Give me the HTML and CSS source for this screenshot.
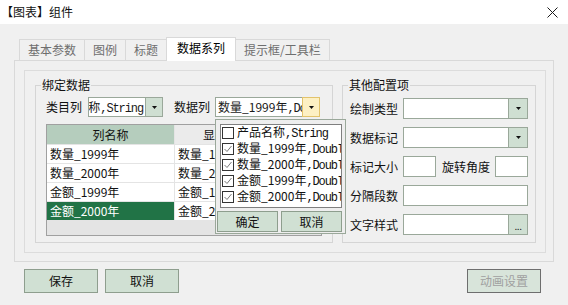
FILE: index.html
```html
<!DOCTYPE html>
<html lang="zh">
<head>
<meta charset="utf-8">
<title>组件</title>
<link rel="stylesheet" href="styles.css">
</head>
<body>
<div class="titlebar">
  <span class="title">【图表】组件</span>
  <svg class="close" width="11" height="11" viewBox="0 0 11 11"><path d="M0.5 0.5L10.5 10.5M10.5 0.5L0.5 10.5" stroke="#1a1a1a" stroke-width="1"/></svg>
</div>
<div class="tabs">
  <div class="tab">基本参数</div>
  <div class="tab">图例</div>
  <div class="tab">标题</div>
  <div class="tab active">数据系列</div>
  <div class="tab">提示框/工具栏</div>
</div>
<div class="pane">
  <div class="inner">
    <fieldset class="fs fs-bind">
      <legend>绑定数据</legend>
      <div class="row">
        <span class="lbl">类目列</span>
        <div class="combo combo-cat">
          <div class="combo-text end"><span>产品名称<span class="mono">,String</span></span></div>
          <div class="combo-btn"><svg width="5" height="3" viewBox="0 0 5 3"><path d="M0 0H5L2.5 3Z" fill="#111"/></svg></div>
        </div>
        <span class="lbl lbl-data">数据列</span>
        <div class="combo combo-data">
          <div class="combo-text">数量_1999年<span class="mono">,Double</span></div>
          <div class="combo-btn hover"><svg width="5" height="3" viewBox="0 0 5 3"><path d="M0 0H5L2.5 3Z" fill="#111"/></svg></div>
          <div class="popup">
            <div class="list">
              <div class="item"><svg width="12" height="12" viewBox="0 0 12 12"><rect x="0.5" y="0.5" width="11" height="11" fill="#fff" stroke="#333"/></svg><span>产品名称<span class="mono">,String</span></span></div>
              <div class="item"><svg width="12" height="12" viewBox="0 0 12 12"><rect x="0.5" y="0.5" width="11" height="11" fill="#fff" stroke="#333"/><path d="M2.5 6L5 8.5L9.5 3" fill="none" stroke="#7a7a7a" stroke-width="1"/></svg><span>数量_1999年<span class="mono">,Double</span></span></div>
              <div class="item"><svg width="12" height="12" viewBox="0 0 12 12"><rect x="0.5" y="0.5" width="11" height="11" fill="#fff" stroke="#333"/><path d="M2.5 6L5 8.5L9.5 3" fill="none" stroke="#7a7a7a" stroke-width="1"/></svg><span>数量_2000年<span class="mono">,Double</span></span></div>
              <div class="item"><svg width="12" height="12" viewBox="0 0 12 12"><rect x="0.5" y="0.5" width="11" height="11" fill="#fff" stroke="#333"/><path d="M2.5 6L5 8.5L9.5 3" fill="none" stroke="#7a7a7a" stroke-width="1"/></svg><span>金额_1999年<span class="mono">,Double</span></span></div>
              <div class="item"><svg width="12" height="12" viewBox="0 0 12 12"><rect x="0.5" y="0.5" width="11" height="11" fill="#fff" stroke="#333"/><path d="M2.5 6L5 8.5L9.5 3" fill="none" stroke="#7a7a7a" stroke-width="1"/></svg><span>金额_2000年<span class="mono">,Double</span></span></div>
            </div>
            <div class="pbtns">
              <div class="pbtn">确定</div>
              <div class="pbtn">取消</div>
            </div>
          </div>
        </div>
      </div>
      <div class="grid">
        <div class="cell head first">列名称</div>
        <div class="cell head">显示名称</div>
        <div class="cell">数量_1999年</div>
        <div class="cell">数量_1999年</div>
        <div class="cell">数量_2000年</div>
        <div class="cell">数量_2000年</div>
        <div class="cell">金额_1999年</div>
        <div class="cell">金额_1999年</div>
        <div class="cell sel">金额_2000年</div>
        <div class="cell">金额_2000年</div>
      </div>
    </fieldset>
    <fieldset class="fs fs-other">
      <legend>其他配置项</legend>
      <div class="form">
        <div class="frow">
          <span class="lbl">绘制类型</span>
          <div class="field"><div class="ftext"></div><div class="fbtn"><svg width="5" height="3" viewBox="0 0 5 3"><path d="M0 0H5L2.5 3Z" fill="#111"/></svg></div></div>
        </div>
        <div class="frow">
          <span class="lbl">数据标记</span>
          <div class="field"><div class="ftext"></div><div class="fbtn"><svg width="5" height="3" viewBox="0 0 5 3"><path d="M0 0H5L2.5 3Z" fill="#111"/></svg></div></div>
        </div>
        <div class="frow">
          <span class="lbl">标记大小</span>
          <div class="field small"></div>
          <span class="lbl lbl-rot">旋转角度</span>
          <div class="field small"></div>
        </div>
        <div class="frow">
          <span class="lbl">分隔段数</span>
          <div class="field"></div>
        </div>
        <div class="frow">
          <span class="lbl">文字样式</span>
          <div class="field"><div class="ftext"></div><div class="fbtn dots">...</div></div>
        </div>
      </div>
    </fieldset>
  </div>
</div>
<div class="actions">
  <div class="btn">保存</div>
  <div class="btn">取消</div>
  <div class="btn disabled">动画设置</div>
</div>
</body>
</html>
```

FILE: styles.css
```css
* { box-sizing: border-box; }
html, body { margin: 0; padding: 0; }
body {
  width: 568px;
  height: 305px;
  overflow: hidden;
  background: #f0f0f0;
  font: 12px/14px "Noto Sans CJK SC", "Noto Sans", sans-serif;
  color: #1a1a1a;
}
.mono {
  font-family: "Liberation Mono", "DejaVu Sans Mono", monospace;
  font-size: 12px;
  letter-spacing: -1.1px;
}
.titlebar {
  height: 24px;
  background: #fff;
  display: flex;
  align-items: center;
  justify-content: space-between;
  padding: 0 10px 0 1px;
}
.title { line-height: 24px; color: #111; }
.close { display: block; margin-top: 1px; }

.tabs {
  display: flex;
  align-items: flex-end;
  height: 23px;
  margin-top: 13px;
  padding-left: 19px;
  position: relative;
  z-index: 1;
}
.tab {
  height: 21px;
  padding: 0 8px;
  border: 1px solid #d9d9d9;
  border-bottom: none;
  margin-left: -1px;
  color: #6e6e6e;
  line-height: 20px;
  background: #f0f0f0;
  white-space: nowrap;
}
.tab:first-child { margin-left: 0; }
.tab.active {
  height: 24px;
  margin-bottom: -1px;
  padding: 0 10px;
  background: #fff;
  color: #000;
  position: relative;
  z-index: 2;
}

.pane {
  margin: 0 14px;
  height: 202px;
  border: 1px solid #d9d9d9;
  padding: 9px 7px 8px 9px;
}
.inner {
  height: 100%;
  border: 1px solid #dcdcdc;
  padding: 7px 9px 9px 10px;
  display: flex;
  gap: 9px;
}
fieldset {
  margin: 0;
  border: 1px solid #d5d5d5;
  min-width: 0;
}
legend {
  padding: 0 1px;
  line-height: 14px;
  color: #111;
}
.fs-bind { width: 298px; padding: 5px 10px 6px 10px; }
.fs-bind legend { margin-left: -5px; }
.fs-other { width: 194px; padding: 6px 7px 6px 7px; }
.fs-other legend { margin-left: -2px; }

.row { display: flex; align-items: center; height: 20px; }
.lbl { white-space: nowrap; color: #111; }
.combo {
  display: flex;
  height: 20px;
  border: 1px solid #9aa89a;
  background: #fff;
  position: relative;
}
.combo-cat { width: 75px; margin-left: 6px; }
.lbl-data { margin-left: 11px; }
.combo-data { width: 105px; margin-left: 5px; }
.combo-text {
  flex: 1;
  min-width: 0;
  overflow: hidden;
  white-space: nowrap;
  padding-left: 2px;
  line-height: 18px;
}
.combo-text.end { display: flex; justify-content: flex-end; padding-right: 2px; }
.combo-text.end > span { flex: none; }
.combo-btn {
  width: 17px;
  border-left: 1px solid #9aa89a;
  background: #cfdfd2;
  display: flex;
  align-items: center;
  justify-content: center;
}
.combo-btn.hover {
  width: 18px;
  margin: -1px -1px -1px 0;
  border: 1px solid #e2c36c;
  background: #fdf0c3;
}
.combo-btn svg, .fbtn svg { display: block; }

.popup {
  position: absolute;
  top: calc(100% + 3px);
  left: -1px;
  width: 131px;
  background: #eeeeee;
  border: 1px solid #9aa89a;
  padding: 4px 3px 1px 4px;
  z-index: 5;
}
.list {
  height: 84px;
  background: #fff;
  border: 1px solid #7f7f7f;
  overflow: hidden;
}
.item {
  height: 16px;
  display: flex;
  align-items: center;
  padding-left: 1px;
  white-space: nowrap;
  color: #111;
}
.item svg { flex: none; display: block; margin-right: 3px; }
.pbtns {
  display: flex;
  gap: 3px;
  margin: 3px 0 0 -3px;
}
.pbtn {
  flex: 1;
  height: 21px;
  border: 1px solid #8e9e8e;
  background: #d0e0d3;
  text-align: center;
  line-height: 19px;
  color: #111;
}

.grid {
  margin-top: 7px;
  height: 112px;
  border: 1px solid #a0a0a0;
  background: #e4e4e4;
  display: grid;
  grid-template-columns: 127px 104px;
  grid-template-rows: 19px;
  grid-auto-rows: 18px;
  gap: 1px;
  align-content: start;
}
.cell {
  background: #fff;
  padding-left: 3px;
  line-height: 18px;
  white-space: nowrap;
  overflow: hidden;
  color: #111;
}
.cell.head {
  background: #ebebeb;
  text-align: center;
  line-height: 19px;
  padding: 0;
}
.cell.head.first { background: #b5cdbd; }
.cell.sel { background: #217346; color: #fff; }

.form { display: flex; flex-direction: column; gap: 8px; }
.frow { display: flex; align-items: center; height: 21px; }
.field {
  width: 125px;
  height: 21px;
  margin-left: 5px;
  border: 1px solid #9aa89a;
  background: #fff;
  display: flex;
}
.field.small { width: 33px; }
.lbl-rot { margin-left: 6px; }
.ftext { flex: 1; }
.fbtn {
  width: 19px;
  border-left: 1px solid #9aa89a;
  background: #cfdfd2;
  display: flex;
  align-items: center;
  justify-content: center;
}
.fbtn.dots {
  align-items: flex-end;
  font-size: 10px;
  line-height: 10px;
  padding-bottom: 3px;
  letter-spacing: -0.5px;
}

.actions {
  display: flex;
  margin: 7px 27px 0 24px;
}
.btn {
  width: 74px;
  height: 24px;
  border: 1px solid #8e9e8e;
  background: #d0e0d3;
  text-align: center;
  line-height: 22px;
  color: #111;
}
.btn + .btn { margin-left: 7px; }
.btn.disabled {
  margin-left: auto;
  color: #a0a0a0;
  border-color: #6e6e6e;
  background: #d8e4da;
}
```
